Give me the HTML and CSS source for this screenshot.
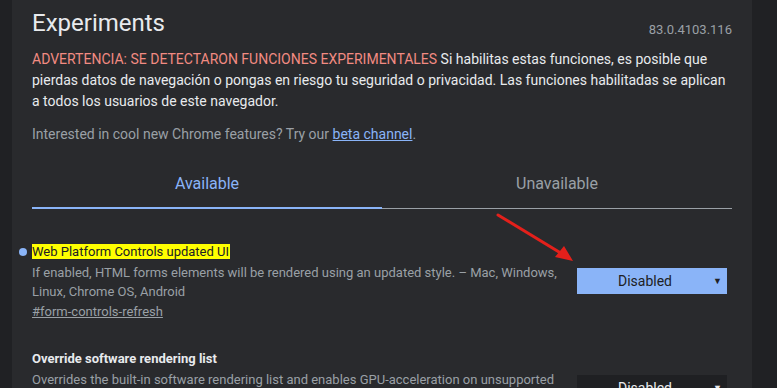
FILE: index.html
```html
<!DOCTYPE html>
<html lang="es">
<head>
  <meta charset="UTF-8" />
  <title>Experiments</title>
  <link rel="stylesheet" href="styles.css">
</head>
<body>

<div class="panel">
  <div class="header">
    <h1>Experiments</h1>
    <span class="version">83.0.4103.116</span>
  </div>

  <p class="warning">
    <span class="warn-red">ADVERTENCIA: SE DETECTARON FUNCIONES EXPERIMENTALES</span>
    Si habilitas estas funciones, es posible que pierdas datos de navegación o pongas en riesgo tu seguridad o privacidad. Las funciones habilitadas se aplican a todos los usuarios de este navegador.
  </p>

  <p class="promo">Interested in cool new Chrome features? Try our <a href="#">beta channel</a>.</p>

  <div class="tabs">
    <div class="tab active">Available</div>
    <div class="tab">Unavailable</div>
  </div>

  <div class="experiment">
    <div class="exp-text">
      <h3 class="exp-name modified"><span class="mark">Web Platform Controls updated UI</span></h3>
      <p class="exp-desc">If enabled, HTML forms elements will be rendered using an updated style. – Mac, Windows, Linux, Chrome OS, Android</p>
      <a class="exp-link" href="#">#form-controls-refresh</a>
    </div>
    <div class="select active-select">Disabled<span class="caret">▼</span></div>
  </div>

  <div class="experiment second">
    <div class="exp-text">
      <h3 class="exp-name bold">Override software rendering list</h3>
      <p class="exp-desc">Overrides the built-in software rendering list and enables GPU-acceleration on unsupported system configurations.</p>
    </div>
    <div class="select">Disabled<span class="caret">▼</span></div>
  </div>

  <svg class="arrow" width="90" height="60" viewBox="0 0 90 60">
    <line x1="4" y1="4" x2="70" y2="44" stroke="#e3201b" stroke-width="3" stroke-linecap="round"/>
    <polygon points="79,50 61,46 70,35" fill="#e3201b"/>
  </svg>
</div>

</body>
</html>
```

FILE: styles.css
```css
body {
  margin: 0;
  background: #202124;
  font-family: Roboto, 'Liberation Sans', sans-serif;
  height: 388px;
  overflow: hidden;
}

.panel {
  position: relative;
  margin-left: 12px;
  width: 700px;
  min-height: 388px;
  padding: 0 20px;
  background: #292a2d;
}

.header {
  display: flex;
  justify-content: space-between;
  align-items: flex-end;
  padding-top: 7px;
}

h1 {
  margin: 0;
  font-size: 24px;
  font-weight: 400;
  color: #e8eaed;
  line-height: 32px;
}

.version {
  font-size: 13px;
  color: #9aa0a6;
  margin-bottom: 2px;
}

.warning {
  margin: 10px 0 0;
  font-size: 14px;
  line-height: 21px;
  color: #e8eaed;
}

.warn-red {
  color: #f28b82;
}

.promo {
  margin: 12px 0 0;
  font-size: 14px;
  line-height: 21px;
  color: #9aa0a6;
}

.promo a {
  color: #8ab4f8;
}

.tabs {
  display: flex;
  margin-top: 17px;
  border-bottom: 1px solid #9aa0a6;
}

.tab {
  flex: 1;
  text-align: center;
  font-size: 16px;
  color: #9aa0a6;
  padding: 12px 0 14px;
}

.tab.active {
  color: #8ab4f8;
  border-bottom: 2px solid #8ab4f8;
  margin-bottom: -1px;
}

.experiment {
  display: flex;
  justify-content: space-between;
  margin-top: 33px;
}

.experiment.second {
  margin-top: 28px;
}

.exp-text {
  width: 530px;
}

.exp-name {
  position: relative;
  margin: 0;
  font-size: 13px;
  line-height: 19px;
  font-weight: 400;
  color: #e8eaed;
}

.exp-name.modified::before {
  content: "";
  position: absolute;
  left: -13px;
  top: 6px;
  width: 8px;
  height: 8px;
  border-radius: 50%;
  background: #8ab4f8;
}

.exp-name.bold {
  font-weight: 700;
}

.mark {
  background: #ffff00;
  color: #202124;
  padding: 0 1px 0 0;
}

.exp-desc {
  margin: 2px 0 0;
  font-size: 13px;
  line-height: 19px;
  color: #9aa0a6;
}

.exp-link {
  display: inline-block;
  margin-top: 1px;
  font-size: 13px;
  line-height: 19px;
  color: #9aa0a6;
}

.select {
  position: relative;
  align-self: flex-start;
  margin: 26px 5px 0 0;
  width: 150px;
  height: 26px;
  line-height: 26px;
  text-align: center;
  font-size: 14px;
  background: #1f2023;
  color: #e8eaed;
  box-sizing: border-box;
  padding-right: 14px;
}

.active-select {
  background: #8ab4f8;
  color: #202124;
}

.caret {
  position: absolute;
  right: 5px;
  top: 0;
  font-size: 9px;
}

.arrow {
  position: absolute;
  left: 482px;
  top: 211px;
}
```
